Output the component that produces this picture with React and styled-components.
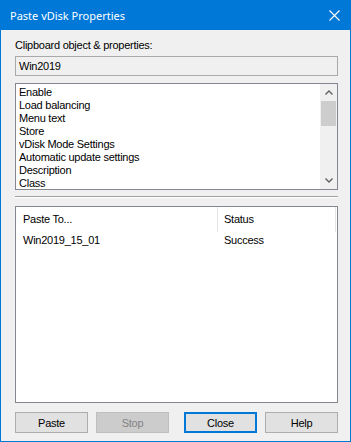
import React from "react";
import styled, { createGlobalStyle } from "styled-components";

const GlobalStyle = createGlobalStyle`
  html, body {
    margin: 0;
    padding: 0;
    background: #ffffff;
  }
  * {
    box-sizing: border-box;
  }
`;

const Window = styled.div`
  width: 351px;
  height: 442px;
  border: 1px solid #0078d7;
  background: #f0f0f0;
  display: flex;
  flex-direction: column;
  font-family: "Liberation Sans", Arial, sans-serif;
  font-size: 11px;
  letter-spacing: -0.25px;
  color: #000;
`;

const TitleBar = styled.div`
  height: 29px;
  background: #0078d7;
  display: flex;
  align-items: center;
  justify-content: space-between;
  padding: 0 9px 0 9px;
  color: #fff;
  font-family: "Noto Sans", "Open Sans", sans-serif;
  font-size: 11px;
  letter-spacing: 0;
`;

const CloseGlyph = styled.svg`
  width: 11px;
  height: 11px;
  margin-right: 1px;
`;

const Content = styled.div`
  flex: 1;
  display: flex;
  flex-direction: column;
  padding: 0 12px 0 14px;
`;

const Label = styled.div`
  margin-top: 9px;
  height: 13px;
  line-height: 13px;
`;

const ReadOnlyBox = styled.div`
  margin-top: 4px;
  height: 20px;
  border: 1px solid #a9a9a9;
  background: #f0f0f0;
  padding-left: 3px;
  line-height: 18px;
`;

const ListBox = styled.div`
  margin-top: 7px;
  height: 107px;
  border: 1px solid #828790;
  background: #fff;
  display: flex;
`;

const Items = styled.div`
  flex: 1;
  padding: 2px 0 0 3px;
  overflow: hidden;
`;

const Item = styled.div`
  height: 13px;
  line-height: 13px;
  white-space: nowrap;
`;

const ScrollBar = styled.div`
  width: 17px;
  background: #f0f0f0;
  display: flex;
  flex-direction: column;
  align-items: stretch;
`;

const ArrowButton = styled.div`
  height: 17px;
  display: flex;
  align-items: center;
  justify-content: center;
`;

const Track = styled.div`
  flex: 1;
  padding: 0 1px;
`;

const Thumb = styled.div`
  height: 25px;
  background: #cdcdcd;
`;

const Separator = styled.div`
  margin-top: 6px;
  height: 2px;
  border-top: 1px solid #a0a0a0;
  border-bottom: 1px solid #ffffff;
`;

const ListView = styled.div`
  margin-top: 8px;
  height: 197px;
  border: 1px solid #828790;
  background: #fff;
`;

const HeaderRow = styled.div`
  display: flex;
  height: 25px;
`;

const HeaderCell = styled.div`
  width: ${(p) => p.width}px;
  padding-left: ${(p) => p.pad}px;
  line-height: 25px;
  border-right: 1px solid #e5e5e5;
`;

const Row = styled.div`
  display: flex;
  height: 17px;
  line-height: 17px;
`;

const Cell = styled.div`
  width: ${(p) => p.width}px;
  padding-left: ${(p) => p.pad}px;
  white-space: nowrap;
`;

const ButtonBar = styled.div`
  margin-top: 9px;
  display: flex;
  justify-content: space-between;
`;

const ButtonGroup = styled.div`
  display: flex;
  gap: 8px;
`;

const Button = styled.button`
  width: 73px;
  height: 21px;
  padding: 0;
  font-family: "Liberation Sans", Arial, sans-serif;
  font-size: 11px;
  letter-spacing: -0.25px;
  background: ${(p) => (p.disabled ? "#cccccc" : "#e1e1e1")};
  color: ${(p) => (p.disabled ? "#838383" : "#000")};
  border: ${(p) =>
    p.primary ? "2px solid #0078d7" : p.disabled ? "1px solid #bfbfbf" : "1px solid #adadad"};
`;

const Chevron = ({ down }) => (
  <svg width="8" height="5" viewBox="0 0 8 5">
    <path
      d={down ? "M0.5 0.5 L4 4 L7.5 0.5" : "M0.5 4.5 L4 1 L7.5 4.5"}
      fill="none"
      stroke="#606060"
      strokeWidth="1.4"
    />
  </svg>
);

const properties = [
  "Enable",
  "Load balancing",
  "Menu text",
  "Store",
  "vDisk Mode Settings",
  "Automatic update settings",
  "Description",
  "Class",
];

const results = [{ target: "Win2019_15_01", status: "Success" }];

export default function App() {
  return (
    <>
      <GlobalStyle />
      <Window>
        <TitleBar>
          <span>Paste vDisk Properties</span>
          <CloseGlyph viewBox="0 0 11 11">
            <path d="M0.5 0.5 L10.5 10.5 M10.5 0.5 L0.5 10.5" stroke="#fff" strokeWidth="1.1" />
          </CloseGlyph>
        </TitleBar>
        <Content>
          <Label>Clipboard object &amp; properties:</Label>
          <ReadOnlyBox>Win2019</ReadOnlyBox>
          <ListBox>
            <Items>
              {properties.map((p) => (
                <Item key={p}>{p}</Item>
              ))}
            </Items>
            <ScrollBar>
              <ArrowButton>
                <Chevron />
              </ArrowButton>
              <Track>
                <Thumb />
              </Track>
              <ArrowButton>
                <Chevron down />
              </ArrowButton>
            </ScrollBar>
          </ListBox>
          <Separator />
          <ListView>
            <HeaderRow>
              <HeaderCell width={202} pad={7}>
                Paste To...
              </HeaderCell>
              <HeaderCell width={118} pad={6}>
                Status
              </HeaderCell>
            </HeaderRow>
            {results.map((r) => (
              <Row key={r.target}>
                <Cell width={202} pad={7}>
                  {r.target}
                </Cell>
                <Cell width={118} pad={6}>
                  {r.status}
                </Cell>
              </Row>
            ))}
          </ListView>
          <ButtonBar>
            <ButtonGroup>
              <Button>Paste</Button>
              <Button disabled>Stop</Button>
            </ButtonGroup>
            <ButtonGroup>
              <Button primary>Close</Button>
              <Button>Help</Button>
            </ButtonGroup>
          </ButtonBar>
        </Content>
      </Window>
    </>
  );
}
